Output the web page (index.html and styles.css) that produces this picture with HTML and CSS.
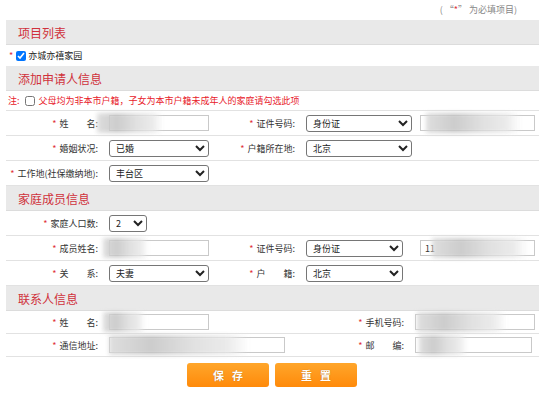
FILE: index.html
```html
<!DOCTYPE html>
<html lang="zh-CN">
<head>
    <meta charset="UTF-8">
    <title>申请信息</title>
    <link rel="stylesheet" href="styles.css">
</head>
<body>
    <div class="wrap">
        <div class="tip">( “<em>*</em>” 为必填项目)</div>

        <!-- 项目列表 -->
        <div class="bar">项目列表</div>
        <div class="project">
            <em>*</em>
            <input type="checkbox" checked>
            <span>亦城亦禧家园</span>
        </div>

        <!-- 申请人 -->
        <div class="bar">添加申请人信息</div>
        <div class="note">注: <input type="checkbox"> 父母均为非本市户籍，子女为本市户籍未成年人的家庭请勾选此项</div>
        <div class="row top">
            <label class="lbl"><em>*</em>姓　　名:</label>
            <div class="fld"><input type="text" class="txt w100"><span class="mask m1"></span></div>
            <label class="lbl"><em>*</em>证件号码:</label>
            <div class="fld">
                <select class="sel w106"><option>身份证</option></select>
            </div>
            <div class="fld"><input type="text" class="txt w115"><span class="mask m2"></span></div>
        </div>
        <div class="row">
            <label class="lbl"><em>*</em>婚姻状况:</label>
            <div class="fld"><select class="sel w100"><option>已婚</option></select></div>
            <label class="lbl"><em>*</em>户籍所在地:</label>
            <div class="fld"><select class="sel w106"><option>北京</option></select></div>
            <div></div>
        </div>
        <div class="row">
            <label class="lbl"><em>*</em>工作地(社保缴纳地):</label>
            <div class="fld"><select class="sel w100"><option>丰台区</option></select></div>
            <div></div><div></div><div></div>
        </div>

        <!-- 家庭成员 -->
        <div class="bar">家庭成员信息</div>
        <div class="row">
            <label class="lbl"><em>*</em>家庭人口数:</label>
            <div class="fld"><select class="sel w38"><option>2</option></select></div>
            <div></div><div></div><div></div>
        </div>
        <div class="row">
            <label class="lbl"><em>*</em>成员姓名:</label>
            <div class="fld"><input type="text" class="txt w100"><span class="mask m3"></span></div>
            <label class="lbl"><em>*</em>证件号码:</label>
            <div class="fld"><select class="sel w97"><option>身份证</option></select></div>
            <div class="fld"><input type="text" class="txt w115" value="11"><span class="mask m4"></span></div>
        </div>
        <div class="row">
            <label class="lbl"><em>*</em>关　　系:</label>
            <div class="fld"><select class="sel w100"><option>夫妻</option></select></div>
            <label class="lbl"><em>*</em>户　　籍:</label>
            <div class="fld"><select class="sel w97"><option>北京</option></select></div>
            <div></div>
        </div>

        <!-- 联系人 -->
        <div class="bar">联系人信息</div>
        <div class="row contact">
            <label class="lbl"><em>*</em>姓　　名:</label>
            <div class="fld"><input type="text" class="txt w100"><span class="mask m5"></span></div>
            <label class="lbl"><em>*</em>手机号码:</label>
            <div class="fld"><input type="text" class="txt w120"><span class="mask m6"></span></div>
        </div>
        <div class="row contact">
            <label class="lbl"><em>*</em>通信地址:</label>
            <div class="fld"><input type="text" class="txt w176"><span class="mask m7"></span></div>
            <label class="lbl"><em>*</em>邮　　编:</label>
            <div class="fld"><input type="text" class="txt w117"><span class="mask m8"></span></div>
        </div>

        <div class="btns">
            <button class="btn">保存</button>
            <button class="btn">重置</button>
        </div>
    </div>
</body>
</html>
```

FILE: styles.css
```css
body {
    margin: 0;
    background: #fff;
    font-family: "Noto Sans CJK SC", "Microsoft YaHei", sans-serif;
    font-size: 9px;
    color: #333;
}

em {
    font-style: normal;
    color: #e0303a;
}

.wrap {
    width: 533px;
    margin-left: 6px;
}

.tip {
    height: 20px;
    line-height: 20px;
    text-align: right;
    padding-right: 22px;
    color: #888;
}

.bar {
    height: 25px;
    line-height: 25px;
    padding-left: 12px;
    background-color: #e9e9e9;
    border-bottom: 1px solid #dcdcdc;
    font-size: 12px;
    color: #d0313b;
    box-sizing: border-box;
}

.project {
    height: 21px;
    display: flex;
    align-items: center;
    padding-left: 3px;
    font-size: 9px;
    color: #222;
}

.project input {
    width: 10px;
    height: 10px;
    margin: 0 2px 0 3px;
}

.note {
    height: 20px;
    display: flex;
    align-items: center;
    padding-left: 2px;
    color: #e8202a;
    font-size: 9px;
    border-bottom: 1px solid #e2e2e2;
    box-sizing: border-box;
}

.note input {
    width: 10px;
    height: 10px;
    margin: 0 4px 0 5px;
}

/* form rows */
.row {
    display: grid;
    grid-template-columns: 99px 115px 82px 114px 123px;
    height: 25px;
    align-items: center;
    border-bottom: 1px solid #e2e2e2;
    box-sizing: border-box;
}

.row.contact {
    grid-template-columns: 99px 200px 106px 128px;
    height: 23px;
}

.lbl {
    text-align: right;
    padding-right: 7px;
    white-space: nowrap;
    color: #333;
}

.lbl em {
    margin-right: 3px;
}

.fld {
    position: relative;
    padding-left: 4px;
    display: flex;
    align-items: center;
}

.txt {
    height: 16px;
    box-sizing: border-box;
    border: 1px solid #c9c9c9;
    padding: 0 4px;
    font-family: inherit;
    font-size: 9px;
    color: #333;
    outline: none;
}

.sel {
    height: 17px;
    box-sizing: border-box;
    padding: 0 2px;
    font-family: inherit;
    font-size: 9px;
    color: #222;
    border: 1px solid #767676;
    border-radius: 3px;
    background: #fff;
}

.w38 { width: 38px; }
.w97 { width: 97px; }
.w100 { width: 100px; }
.w106 { width: 106px; }
.w115 { width: 115px; }
.w117 { width: 117px; }
.w120 { width: 120px; }
.w176 { width: 176px; }

/* blurred private data */
.mask {
    position: absolute;
    top: -2px;
    height: 20px;
    background: linear-gradient(90deg, #d9d9d9, #c4c4c4 30%, #dcdcdc 60%, #e8e8e8 85%, rgba(255,255,255,0));
    filter: blur(2px);
    opacity: 0.85;
}

.m1 { left: -8px; width: 66px; }
.m2 { left: 10px; width: 95px; }
.m3 { left: -2px; width: 45px; }
.m4 { left: 16px; width: 96px; }
.m5 { left: -2px; width: 42px; }
.m6 { left: 6px; width: 90px; }
.m7 { left: 4px; width: 140px; }
.m8 { left: 8px; width: 48px; }

.btns {
    display: flex;
    gap: 6px;
    padding: 6px 0 0 181px;
}

.btn {
    width: 82px;
    height: 24px;
    border: none;
    border-radius: 3px;
    background: linear-gradient(#ffa62b, #ff8a0a);
    color: #fff;
    font-family: inherit;
    font-size: 11px;
    font-weight: bold;
    letter-spacing: 8px;
    text-indent: 8px;
    text-shadow: 0 0 1px rgba(0, 0, 0, 0.35);
    cursor: pointer;
}
```
